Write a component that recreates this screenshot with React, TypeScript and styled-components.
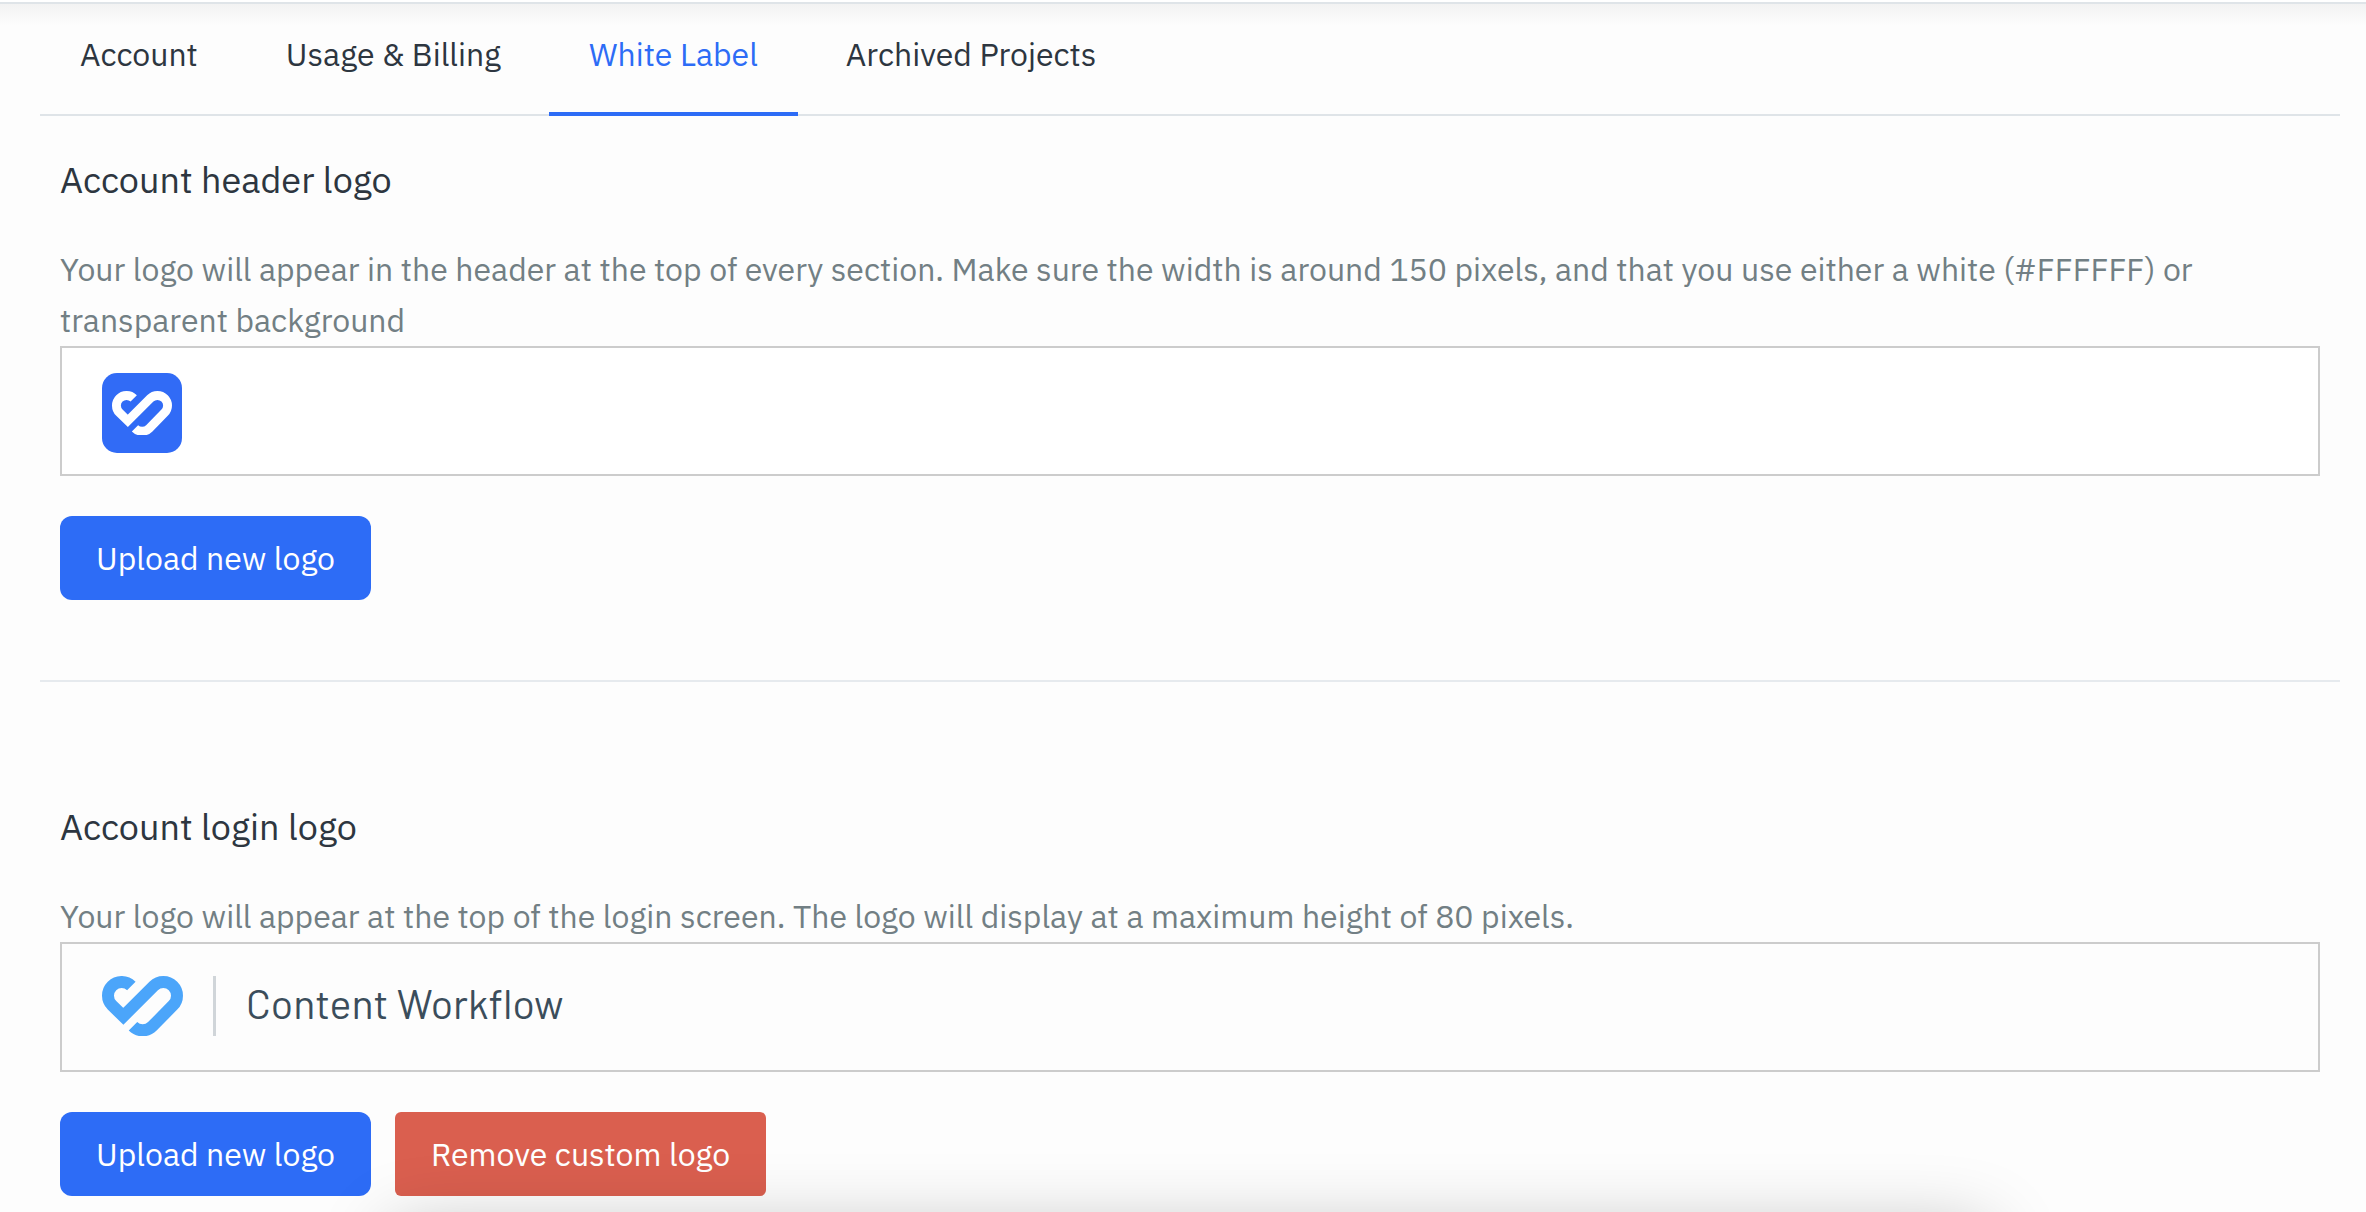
import React from "react";
import styled, { createGlobalStyle } from "styled-components";

const GlobalStyle = createGlobalStyle`
  * { box-sizing: border-box; }
  body {
    margin: 0;
    background: #fdfdfd;
    color: #2d3640;
    font-family: "IBM Plex Sans", Roboto, "Noto Sans", sans-serif;
    font-size: 32px;
    line-height: 51px;
  }
`;

const Page = styled.div`
  min-height: 100vh;
  overflow: hidden;
`;

const HeaderEdge = styled.header`
  height: 4px;
  background: #ffffff;
  border-bottom: 2px solid #dfe4e8;
`;

const Content = styled.main`
  padding: 0 26px 0 40px;
  background: linear-gradient(#f2f2f2, #fdfdfd 22px);
`;

const Tabs = styled.nav`
  display: flex;
  gap: 8px;
  border-bottom: 2px solid #dfe4e8;
`;

const Tab = styled.a<{ $active?: boolean }>`
  margin-bottom: -2px;
  padding: 25px 40px 32px;
  border-bottom: 4px solid ${(p) => (p.$active ? "#2d6cf6" : "transparent")};
  color: ${(p) => (p.$active ? "#2d6cf6" : "inherit")};
  text-decoration: none;
  white-space: nowrap;
`;

const Section = styled.section`
  padding: 38px 20px 80px;

  & + & {
    border-top: 2px solid #e6eaee;
    padding-top: 119px;
    padding-bottom: 16px;
  }
`;

const Title = styled.h2`
  margin: 0 0 39px;
  font-size: 36px;
  font-weight: 400;
  line-height: 51px;
`;

const Description = styled.p`
  margin: 0;
  color: #727f84;
`;

const Preview = styled.div<{ $filled?: boolean }>`
  display: flex;
  align-items: flex-start;
  height: 130px;
  margin-bottom: 40px;
  padding: 25px 40px;
  border: 2px solid #cccccc;
  background: ${(p) => (p.$filled ? "#ffffff" : "transparent")};
`;

const Badge = styled.div`
  display: grid;
  place-items: center;
  width: 80px;
  height: 80px;
  border-radius: 15px;
  background: #316bf6;
  color: #ffffff;
`;

const Wordmark = styled.div`
  display: flex;
  align-items: center;
  height: 74px;
  color: #4ba5fa;
`;

const Rule = styled.span`
  width: 3px;
  height: 60px;
  margin: 0 30px;
  background: #d0d5d9;
`;

const Name = styled.span`
  padding-bottom: 8px;
  color: #3b4d5b;
  font-family: Barlow, Roboto, sans-serif;
  font-size: 41px;
  font-variant-ligatures: none;
`;

const Actions = styled.div`
  display: flex;
  gap: 24px;
`;

const Button = styled.button<{ $danger?: boolean }>`
  height: 84px;
  padding: 0 36px;
  border: 0;
  border-radius: ${(p) => (p.$danger ? 6 : 12)}px;
  background: ${(p) => (p.$danger ? "#da5f4f" : "#2d6cf6")};
  color: #ffffff;
  font: inherit;
  cursor: pointer;
`;

const BottomShade = styled.div`
  position: fixed;
  top: calc(100vh + 16px);
  left: 390px;
  right: 376px;
  height: 200px;
  border-radius: 20px;
  box-shadow: 0 0 70px rgba(0, 0, 0, 0.25);
  pointer-events: none;
`;

function Heart({ width }: { width: number }) {
  return (
    <svg width={width} viewBox="66 77 243 181" fill="none" stroke="currentColor" strokeWidth="36" aria-hidden="true">
      <path d="M154 107A41 41 0 1 0 96 165L130 198L221 107A41 41 0 0 1 279 165L217 228A41 41 0 0 1 159 228" />
    </svg>
  );
}

const tabs = ["Account", "Usage & Billing", "White Label", "Archived Projects"];

export default function App() {
  return (
    <Page>
      <GlobalStyle />
      <HeaderEdge />
      <Content>
        <Tabs>
          {tabs.map((tab) => (
            <Tab key={tab} href="#" $active={tab === "White Label"}>
              {tab}
            </Tab>
          ))}
        </Tabs>
        <Section>
          <Title>Account header logo</Title>
          <Description>
            Your logo will appear in the header at the top of every section. Make sure the width is around 150 pixels,
            and that you use either a white (#FFFFFF) or transparent background
          </Description>
          <Preview $filled>
            <Badge>
              <Heart width={60} />
            </Badge>
          </Preview>
          <Actions>
            <Button type="button">Upload new logo</Button>
          </Actions>
        </Section>
        <Section>
          <Title>Account login logo</Title>
          <Description>
            Your logo will appear at the top of the login screen. The logo will display at a maximum height of 80 pixels.
          </Description>
          <Preview>
            <Wordmark>
              <Heart width={81} />
              <Rule />
              <Name>Content Workflow</Name>
            </Wordmark>
          </Preview>
          <Actions>
            <Button type="button">Upload new logo</Button>
            <Button type="button" $danger>
              Remove custom logo
            </Button>
          </Actions>
        </Section>
      </Content>
      <BottomShade />
    </Page>
  );
}
